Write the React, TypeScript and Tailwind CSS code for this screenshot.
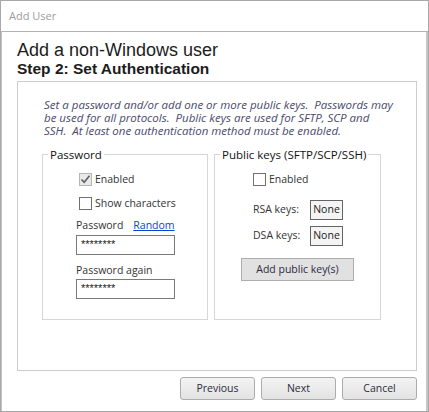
import React from "react";

const ui = "font-['Open_Sans',sans-serif]";
const arial = "font-['Liberation_Sans',Arial,sans-serif]";

function CheckBox({ checked, disabled, label }: { checked?: boolean; disabled?: boolean; label: string }) {
  return (
    <div className="flex items-center gap-[3px] h-[15px]">
      <span
        className={
          "w-[13px] h-[13px] border flex items-center justify-center " +
          (disabled ? "border-[#b5b5b5] bg-[#e9e9e9]" : "border-[#707070] bg-white")
        }
      >
        {checked && (
          <svg width="11" height="11" viewBox="0 0 11 11">
            <path d="M1.5 5.5 L4.2 8.3 L9.5 1.8" fill="none" stroke="#5e5e5e" strokeWidth="1.6" />
          </svg>
        )}
      </span>
      <span className="text-[#333] whitespace-nowrap">{label}</span>
    </div>
  );
}

function GroupBox({ title, className, children }: { title: string; className?: string; children: React.ReactNode }) {
  return (
    <fieldset className={"border border-[#d6d6d6] " + (className ?? "")}>
      <legend className="ml-[5px] px-[2px] leading-[15px] text-[11.5px] text-[#111]">{title}</legend>
      {children}
    </fieldset>
  );
}

function PasswordInput() {
  return (
    <div className={"w-[99px] h-[20px] border border-[#7a7a7a] bg-white pl-[4px] pt-[2px] text-[11px] leading-[12px] text-[#222] " + arial}>
      ********
    </div>
  );
}

function KeyBox() {
  return (
    <div className="w-[33px] h-[20px] border border-[#646464] bg-[#f4f4f4] flex items-center justify-center text-[#222]">
      None
    </div>
  );
}

function DialogButton({ children }: { children: React.ReactNode }) {
  return (
    <button className="w-[75px] h-[23px] rounded-[3px] border border-[#acacac] bg-linear-to-b from-[#f3f3f3] to-[#e3e3e3] text-[#2b2b40]">
      {children}
    </button>
  );
}

export default function App() {
  return (
    <div className={"w-[429px] h-[412px] bg-white border border-[#a8a8a8] flex flex-col text-[10.5px] " + ui}>
      <div className="h-[31px] shrink-0 border-b border-[#b4b4b4] pl-[8px] flex items-center text-[11px] text-[#9c9c9c]">
        Add User
      </div>

      <div className="flex-1 border-l border-r-2 border-[#c6c6c6] pl-[15px] pt-[8px] flex flex-col">
        <h1 className={"text-[18px] leading-[20px] text-[#1c1c1c] " + arial}>Add a non-Windows user</h1>
        <h2 className={"text-[15.5px] leading-[17px] font-bold text-[#1c1c1c] " + arial}>Step 2: Set Authentication</h2>

        <div className="mt-[4px] w-[400px] h-[290px] border border-[#cdcdcd] pl-[24px] pt-[16px]">
          <div className="ml-[2px] italic text-[11.5px] text-[#4a4a6c] leading-[13px] whitespace-pre">
            <div>Set a password and/or add one or more public keys.  Passwords may</div>
            <div>be used for all protocols.  Public keys are used for SFTP, SCP and</div>
            <div>SSH.  At least one authentication method must be enabled.</div>
          </div>

          <div className="flex gap-[6px] mt-[10px]">
            <GroupBox title="Password" className="w-[166px] h-[173px]">
              <div className="pl-[36px] pt-[10px] flex flex-col">
                <CheckBox checked disabled label="Enabled" />
                <div className="mt-[9px]">
                  <CheckBox label="Show characters" />
                </div>
                <div className="-ml-[3px] mt-[7px] flex gap-[10px] text-[#333] leading-[15px]">
                  <span>Password</span>
                  <a className="text-[#0645d6] underline">Random</a>
                </div>
                <div className="-ml-[3px] mt-[2px]">
                  <PasswordInput />
                </div>
                <div className="-ml-[3px] mt-[8px] text-[#333] leading-[15px]">Password again</div>
                <div className="-ml-[3px] mt-[1px]">
                  <PasswordInput />
                </div>
              </div>
            </GroupBox>

            <GroupBox title="Public keys (SFTP/SCP/SSH)" className="w-[167px] h-[173px]">
              <div className="pl-[38px] pt-[10px] flex flex-col">
                <CheckBox label="Enabled" />
                <div className="mt-[13px] flex items-center gap-[8px]">
                  <span className="text-[#333] w-[49px] whitespace-nowrap">RSA keys:</span>
                  <KeyBox />
                </div>
                <div className="mt-[6px] flex items-center gap-[8px]">
                  <span className="text-[#333] w-[49px] whitespace-nowrap">DSA keys:</span>
                  <KeyBox />
                </div>
                <button className="-ml-[12px] mt-[12px] w-[113px] h-[23px] border border-[#adadad] bg-[#e1e1e1] text-[#2b2b40]">
                  Add public key(s)
                </button>
              </div>
            </GroupBox>
          </div>
        </div>

        <div className="w-[400px] mt-[6px] flex justify-end gap-[6px]">
          <DialogButton>Previous</DialogButton>
          <DialogButton>Next</DialogButton>
          <DialogButton>Cancel</DialogButton>
        </div>
      </div>
    </div>
  );
}
